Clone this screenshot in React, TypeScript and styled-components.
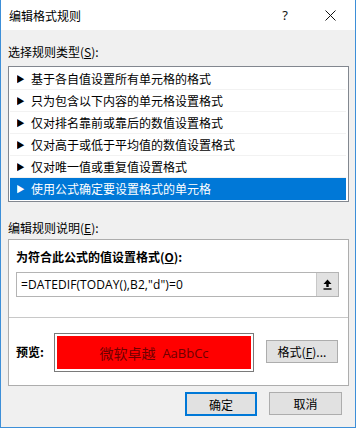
import React from "react";
import styled, { createGlobalStyle } from "styled-components";

const GlobalStyle = createGlobalStyle`
  html, body {
    margin: 0;
    padding: 0;
    background: #ffffff;
  }
  body {
    font-family: "Noto Sans CJK SC", "Noto Sans", sans-serif;
    font-size: 12px;
    color: #000000;
  }
`;

const Window = styled.div`
  width: 356px;
  height: 428px;
  box-sizing: border-box;
  border: 1px solid #3d8fd8;
  border-top: none;
  background: #f0f0f0;
  overflow: hidden;
  display: flex;
  flex-direction: column;
`;

const TitleBar = styled.div`
  height: 30px;
  background: #ffffff;
  display: flex;
  align-items: center;
  padding-left: 8px;
  font-size: 12px;
`;

const TitleText = styled.div`
  flex: 1;
`;

const TitleButton = styled.div<{ $w: number }>`
  width: ${(p) => p.$w}px;
  display: flex;
  align-items: center;
  justify-content: center;
  font-family: "Noto Sans", sans-serif;
  font-size: 13px;
  color: #111;
`;

const Body = styled.div`
  padding: 0 6px 0 7px;
  display: flex;
  flex-direction: column;
`;

const Label = styled.div<{ $top: number }>`
  margin-top: ${(p) => p.$top}px;
  line-height: 16px;
  height: 16px;
  u {
    text-decoration: underline;
  }
`;

const ListBox = styled.div`
  margin-top: 6px;
  border: 1px solid #82878f;
  background: #ffffff;
  padding: 1px 2px 1px 1px;
  display: flex;
  flex-direction: column;
`;

const Row = styled.div<{ $selected?: boolean }>`
  height: 22px;
  box-sizing: border-box;
  display: flex;
  align-items: center;
  padding-left: 7px;
  border-bottom: 1px solid ${(p) => (p.$selected ? "#0078d7" : "#f2f2f2")};
  background: ${(p) => (p.$selected ? "#0078d7" : "#ffffff")};
  color: ${(p) => (p.$selected ? "#ffffff" : "#000000")};
`;

const Arrow = styled.span`
  font-family: "DejaVu Sans", sans-serif;
  font-size: 11px;
  width: 14px;
  transform: scaleX(0.85);
  transform-origin: left center;
`;

const DescBox = styled.div`
  margin-top: 3px;
  height: 147px;
  box-sizing: border-box;
  border: 1px solid #adadad;
  background: #ffffff;
  display: flex;
  flex-direction: column;
`;

const Section = styled.div`
  padding: 9px 9px 0 7px;
  display: flex;
  flex-direction: column;
  height: 78px;
  box-sizing: border-box;
  border-bottom: 1px solid #c8c8c8;
`;

const BoldLabel = styled.div`
  font-weight: bold;
  line-height: 16px;
  height: 16px;
  u {
    text-decoration: underline;
  }
`;

const FormulaField = styled.div`
  margin-top: 7px;
  height: 25px;
  box-sizing: border-box;
  border: 1px solid #b4b4b4;
  display: flex;
  align-items: stretch;
`;

const FormulaText = styled.div`
  flex: 1;
  display: flex;
  align-items: center;
  padding-left: 4px;
  font-family: "Open Sans", "Noto Sans", sans-serif;
  font-size: 12px;
  letter-spacing: 0.1px;
`;

const CollapseButton = styled.div`
  width: 21px;
  background: #e1e1e1;
  border-left: 1px solid #c8c8c8;
  display: flex;
  align-items: center;
  justify-content: center;
`;

const PreviewRow = styled.div`
  flex: 1;
  display: flex;
  align-items: center;
  padding: 0 10px 0 7px;
`;

const PreviewLabel = styled.div`
  font-weight: bold;
  width: 38px;
`;

const PreviewBox = styled.div`
  width: 200px;
  height: 39px;
  box-sizing: border-box;
  border: 1px solid #7a7a7a;
  padding: 2px;
  background: #ffffff;
  display: flex;
  margin-top: 2px;
`;

const PreviewFill = styled.div`
  flex: 1;
  background: #ff0000;
  color: #6e0000;
  font-size: 14px;
  display: flex;
  align-items: center;
  justify-content: center;
  gap: 7px;
`;

const Latin = styled.span`
  font-family: "Open Sans", "Noto Sans", sans-serif;
  font-size: 13px;
`;

const Button = styled.div<{ $primary?: boolean; $w: number }>`
  width: ${(p) => p.$w}px;
  height: ${(p) => (p.$primary ? 24 : 23)}px;
  box-sizing: border-box;
  background: #e1e1e1;
  border: ${(p) => (p.$primary ? "2px solid #0078d7" : "1px solid #adadad")};
  display: flex;
  align-items: center;
  justify-content: center;
  u {
    text-decoration: underline;
  }
`;

const Spacer = styled.div`
  flex: 1;
`;

const ButtonRow = styled.div`
  margin-top: 6px;
  display: flex;
  justify-content: flex-end;
  gap: 12px;
  padding-right: 7px;
`;

const rules = [
  "基于各自值设置所有单元格的格式",
  "只为包含以下内容的单元格设置格式",
  "仅对排名靠前或靠后的数值设置格式",
  "仅对高于或低于平均值的数值设置格式",
  "仅对唯一值或重复值设置格式",
  "使用公式确定要设置格式的单元格",
];

const CloseIcon = () => (
  <svg width="11" height="11" viewBox="0 0 11 11">
    <path d="M0.5 0.5 L10.5 10.5 M10.5 0.5 L0.5 10.5" stroke="#111" strokeWidth="1" />
  </svg>
);

const UploadIcon = () => (
  <svg width="9" height="11" viewBox="0 0 9 11">
    <path d="M4.5 0.5 L8.5 5 L5.7 5 L5.7 8 L3.3 8 L3.3 5 L0.5 5 Z" fill="#000" />
    <rect x="0.5" y="9.3" width="8" height="1.4" fill="#000" />
  </svg>
);

const App = () => {
  return (
    <>
      <GlobalStyle />
      <Window>
        <TitleBar>
          <TitleText>编辑格式规则</TitleText>
          <TitleButton $w={40}>?</TitleButton>
          <TitleButton $w={50}>
            <CloseIcon />
          </TitleButton>
        </TitleBar>
        <Body>
          <Label $top={14}>
            选择规则类型(<u>S</u>):
          </Label>
          <ListBox>
            {rules.map((r, i) => (
              <Row key={i} $selected={i === rules.length - 1}>
                <Arrow>▶</Arrow>
                {r}
              </Row>
            ))}
          </ListBox>
          <Label $top={18}>
            编辑规则说明(<u>E</u>):
          </Label>
          <DescBox>
            <Section>
              <BoldLabel>
                为符合此公式的值设置格式(<u>O</u>):
              </BoldLabel>
              <FormulaField>
                <FormulaText>=DATEDIF(TODAY(),B2,"d")=0</FormulaText>
                <CollapseButton>
                  <UploadIcon />
                </CollapseButton>
              </FormulaField>
            </Section>
            <PreviewRow>
              <PreviewLabel>预览:</PreviewLabel>
              <PreviewBox>
                <PreviewFill>
                  <span>微软卓越</span>
                  <Latin>AaBbCc</Latin>
                </PreviewFill>
              </PreviewBox>
              <Spacer />
              <Button $w={72}>
                格式(<u>F</u>)...
              </Button>
            </PreviewRow>
          </DescBox>
          <ButtonRow>
            <Button $primary $w={72}>确定</Button>
            <Button $w={73}>取消</Button>
          </ButtonRow>
        </Body>
      </Window>
    </>
  );
};

export default App;
